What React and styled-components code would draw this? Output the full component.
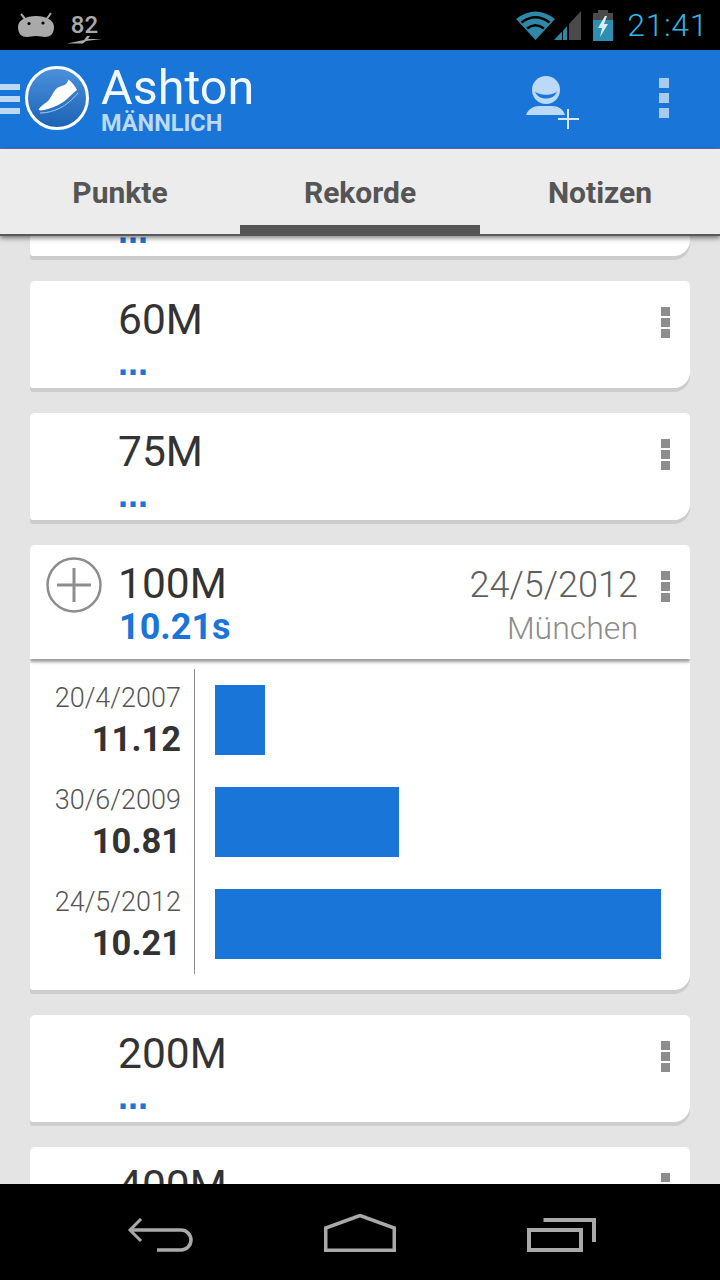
import React from "react";
import styled, { createGlobalStyle } from "styled-components";

const GlobalStyle = createGlobalStyle`
  html, body {
    margin: 0;
    padding: 0;
    background: #000;
    font-family: Roboto, "Liberation Sans", sans-serif;
  }
`;

const Screen = styled.div`
  width: 720px;
  height: 1280px;
  display: flex;
  flex-direction: column;
  overflow: hidden;
  background: #e4e4e4;
`;

const StatusBar = styled.div`
  height: 50px;
  flex: none;
  background: #000;
  display: flex;
  align-items: center;
  padding: 0 12px 0 18px;
`;

const Notifs = styled.div`
  display: flex;
  align-items: center;
  gap: 13px;
  flex: 1;
`;

const SpeedBox = styled.div`
  width: 35px;
  display: flex;
  flex-direction: column;
  align-items: center;
  color: #a9a9a9;
  font-size: 24px;
  font-weight: 500;
  line-height: 24px;
  margin-top: 7px;
  svg { display: block; margin-top: -1px; }
`;

const Clock = styled.div`
  color: #33b5e5;
  font-size: 32px;
  font-weight: 300;
  margin-left: 14px;
  letter-spacing: 0.6px;
`;

const StatusIcons = styled.div`
  display: flex;
  align-items: center;
  gap: 12px;
  svg { display: block; }
`;

const AppBar = styled.div`
  height: 99px;
  flex: none;
  box-sizing: border-box;
  background: #1976d8;
  border-bottom: 1px solid #7263c0;
  display: flex;
  align-items: center;
  position: relative;
  z-index: 2;
`;

const Burger = styled.div`
  width: 20px;
  flex: none;
  display: flex;
  flex-direction: column;
  gap: 6px;
  span {
    display: block;
    height: 6px;
    background: #bcd9f6;
  }
`;

const Logo = styled.div`
  width: 64px;
  height: 64px;
  flex: none;
  margin-left: 5px;
  margin-top: -2px;
  box-sizing: border-box;
  border: 3px solid #fff;
  border-radius: 50%;
  background: linear-gradient(#4a90dc, #1c63b4);
  svg { display: block; }
`;

const TitleBlock = styled.div`
  margin-left: 12px;
  flex: 1;
  display: flex;
  flex-direction: column;
`;

const AppTitle = styled.div`
  color: #f2f8fe;
  font-size: 48.5px;
  font-weight: 400;
  line-height: 46px;
  margin-top: 2px;
`;

const AppSub = styled.div`
  color: #bcd9f6;
  font-size: 23.5px;
  font-weight: 700;
  line-height: 24px;
  margin-top: 0;
`;

const AddUser = styled.div`
  margin-right: 80px;
  margin-top: 8px;
  svg { display: block; }
`;

const BarMenu = styled.div`
  margin-right: 51px;
  margin-top: -2px;
  display: flex;
  flex-direction: column;
  gap: 5px;
  span {
    display: block;
    width: 10px;
    height: 10px;
    background: #a9cbf0;
  }
`;

const Tabs = styled.div`
  height: 87px;
  flex: none;
  display: grid;
  grid-template-columns: repeat(3, 240px);
  background: #ececec;
  border-bottom: 2px solid #5a5a5a;
  box-sizing: border-box;
  position: relative;
  z-index: 2;
  box-shadow: 0 2px 5px rgba(0, 0, 0, 0.5);
`;

const Tab = styled.div`
  display: flex;
  justify-content: center;
  padding-top: 27px;
  color: #555;
  font-size: 30px;
  font-weight: 700;
  line-height: 34px;
  position: relative;
  ${(p) =>
    p.$active &&
    `&::after {
      content: "";
      position: absolute;
      left: 0;
      right: 0;
      bottom: -2px;
      height: 11px;
      background: #555;
    }`}
`;

const Content = styled.div`
  flex: 1;
  min-height: 0;
  overflow: hidden;
`;

const List = styled.div`
  margin-top: -87px;
  padding: 0 30px;
  display: flex;
  flex-direction: column;
  gap: 25px;
`;

const Card = styled.div`
  background: #fff;
  border-radius: 5px 5px 16px 3px;
  box-shadow: 0 4px 0 #cdcdcd;
  overflow: hidden;
`;

const CardHead = styled.div`
  height: ${(p) => (p.$open ? "114px" : "107px")};
  display: flex;
  align-items: flex-start;
  position: relative;
  ${(p) => p.$open && `box-shadow: 0 3px 3px rgba(0, 0, 0, 0.4);`}
`;

const IconSlot = styled.div`
  width: 89px;
  flex: none;
  padding: 12px 0 0 16px;
  box-sizing: border-box;
  svg { display: block; }
`;

const Names = styled.div`
  flex: 1;
  padding-top: 13px;
  margin-left: -1px;
`;

const Dist = styled.div`
  color: #333;
  font-size: 42.5px;
  font-weight: 400;
  line-height: 52px;
`;

const Value = styled.div`
  color: #1976d8;
  font-size: 36px;
  font-weight: 700;
  line-height: 36px;
  margin: -1px 0 0 1px;
  ${(p) => p.$empty && `font-family: "Liberation Sans", sans-serif; margin: -1px 0 0;`}
`;

const Meta = styled.div`
  text-align: right;
  padding-top: 18px;
  margin-right: 3px;
`;

const MetaDate = styled.div`
  color: #5f5f5f;
  font-size: 36px;
  font-weight: 300;
  line-height: 45px;
`;

const MetaPlace = styled.div`
  color: #8c8c8c;
  font-size: 32px;
  font-weight: 300;
  line-height: 40px;
`;

const MoreButton = styled.div`
  width: 49px;
  flex: none;
  display: flex;
  flex-direction: column;
  align-items: center;
  gap: 2px;
  padding-top: 26px;
  box-sizing: border-box;
  span {
    display: block;
    width: 9px;
    height: 9px;
    background: #8d8d8d;
  }
`;

const Chart = styled.div`
  display: flex;
  padding: 10px 29px 16px 0;
`;

const Labels = styled.div`
  width: 165px;
  flex: none;
  box-sizing: border-box;
  border-right: 1px solid #8d8d8d;
  padding: 13px 13px 10px 0;
  display: flex;
  flex-direction: column;
  gap: 24px;
  text-align: right;
`;

const LabelItem = styled.div`
  height: 78px;
`;

const LabelDate = styled.div`
  color: #555;
  font-size: 27px;
  font-weight: 300;
  line-height: 32px;
`;

const LabelValue = styled.div`
  color: #333;
  font-size: 34.5px;
  font-weight: 700;
  line-height: 46px;
  padding-top: 2px;
`;

const Bars = styled.div`
  flex: 1;
  padding: 16px 0 0 20px;
  display: flex;
  flex-direction: column;
  gap: 32px;
`;

const Bar = styled.div`
  height: 70px;
  background: #1976d8;
`;

const NavBar = styled.div`
  height: 96px;
  flex: none;
  box-sizing: border-box;
  background: #000;
  position: relative;
  z-index: 2;
  display: flex;
  justify-content: center;
  align-items: flex-end;
  gap: 131px;
  padding: 0 0 28px 2px;
  svg { display: block; }
`;

const rows = [
  { date: "20/4/2007", value: "11.12", width: 50 },
  { date: "30/6/2009", value: "10.81", width: 184 },
  { date: "24/5/2012", value: "10.21", width: 446 },
];

const More = () => (
  <MoreButton>
    <span />
    <span />
    <span />
  </MoreButton>
);

const EmptyCard = ({ name }) => (
  <Card>
    <CardHead>
      <IconSlot />
      <Names>
        <Dist>{name}</Dist>
        <Value $empty>...</Value>
      </Names>
      <More />
    </CardHead>
  </Card>
);

export default function App() {
  return (
    <Screen>
      <GlobalStyle />
      <StatusBar>
        <Notifs>
          <svg width="36" height="26" viewBox="0 0 36 26">
            <path d="M3 2l5 6M33 1l-5 7" stroke="#a9a9a9" strokeWidth="2" />
            <path
              d="M0 15C0 8 8 4 18 4s18 4 18 11c0 7-4 10-9 10-3 0-5-1-9-1s-6 1-9 1C4 25 0 22 0 15z"
              fill="#a9a9a9"
            />
            <circle cx="11" cy="11.500" r="1.600" fill="#000" />
            <circle cx="25" cy="11" r="1.600" fill="#000" />
          </svg>
          <SpeedBox>
            82
            <svg width="35" height="8" viewBox="0 0 35 8">
              <path d="M0 7.500l17-3.500 3-4h3l-2 3h14l-16 2-3 2.500z" fill="#a9a9a9" />
            </svg>
          </SpeedBox>
        </Notifs>
        <StatusIcons>
          <svg width="65" height="30" viewBox="0 0 65 30">
            <path d="M0 9Q19.500-6 39 9L19.500 30z" fill="#2f87a8" />
            <path
              d="M5.500 12.500Q19.500 2 33.500 12.500M11 18.500Q19.500 12 28 18.500"
              fill="none"
              stroke="#000"
              strokeWidth="2.500"
            />
            <path d="M38 30l8-8.500V30z" fill="#2f87a8" />
            <path d="M47 30V20.500l4-4.300V30z" fill="#2f87a8" />
            <path d="M53 30V14L65 1v29z" fill="#4a4a4a" />
          </svg>
          <svg width="20" height="31" viewBox="0 0 20 31">
            <path d="M5 0h10v3H5z" fill="#4a4a4a" />
            <path d="M0 3h20v7H0z" fill="#4a4a4a" />
            <path d="M0 10h20v21H0z" fill="#2f8fb3" />
            <path d="M12 6l-7 12h4l-2 9 8-13h-4l3-8z" fill="#d8edf6" />
          </svg>
        </StatusIcons>
        <Clock>21:41</Clock>
      </StatusBar>

      <AppBar>
        <Burger>
          <span />
          <span />
          <span />
        </Burger>
        <Logo>
          <svg width="58" height="58" viewBox="0 0 58 58">
            <path
              d="M10.500 41C13 36 17 35 20 32c3-3 5-9 8-12 3-3 7-3 10-5 1-1 2-3 2.500-4.500 3.500 2.500 6.500 6.500 8.500 10.500-4 3-7 6-11 10-5 4-11 7-18 9-4 1-7 2-9.500 1z"
              fill="#fff"
            />
            <path
              d="M12 44c7 0 14-2 20-5s12-8 18-15"
              fill="none"
              stroke="#a9cbf0"
              strokeWidth="1"
            />
          </svg>
        </Logo>
        <TitleBlock>
          <AppTitle>Ashton</AppTitle>
          <AppSub>MÄNNLICH</AppSub>
        </TitleBlock>
        <AddUser>
          <svg width="54" height="56" viewBox="0 0 54 56">
            <circle cx="21" cy="15" r="14" fill="#bcd9f6" />
            <path d="M10 16c3 5 19 5 22 0-2 10-20 10-22 0z" fill="#1976d8" />
            <path d="M1 40c2-6 8-9 13-9h13c6 0 11 3 13 9z" fill="#bcd9f6" />
            <path d="M43 34v20M33 44h21" stroke="#d6e8fa" strokeWidth="2" />
          </svg>
        </AddUser>
        <BarMenu>
          <span />
          <span />
          <span />
        </BarMenu>
      </AppBar>

      <Tabs>
        <Tab>Punkte</Tab>
        <Tab $active>Rekorde</Tab>
        <Tab>Notizen</Tab>
      </Tabs>

      <Content>
        <List>
          <EmptyCard name="50M" />
          <EmptyCard name="60M" />
          <EmptyCard name="75M" />
          <Card>
            <CardHead $open>
              <IconSlot>
                <svg width="56" height="56" viewBox="0 0 56 56">
                  <circle cx="28" cy="28" r="26.500" fill="none" stroke="#8d8d8d" strokeWidth="2.500" />
                  <path d="M11 28h34M28 11v34" stroke="#8d8d8d" strokeWidth="3" />
                </svg>
              </IconSlot>
              <Names>
                <Dist>100M</Dist>
                <Value>10.21s</Value>
              </Names>
              <Meta>
                <MetaDate>24/5/2012</MetaDate>
                <MetaPlace>München</MetaPlace>
              </Meta>
              <More />
            </CardHead>
            <Chart>
              <Labels>
                {rows.map((r) => (
                  <LabelItem key={r.date}>
                    <LabelDate>{r.date}</LabelDate>
                    <LabelValue>{r.value}</LabelValue>
                  </LabelItem>
                ))}
              </Labels>
              <Bars>
                {rows.map((r) => (
                  <Bar key={r.date} style={{ width: r.width }} />
                ))}
              </Bars>
            </Chart>
          </Card>
          <EmptyCard name="200M" />
          <EmptyCard name="400M" />
        </List>
      </Content>

      <NavBar>
        <svg width="66" height="34" viewBox="0 0 66 34">
          <path d="M14 1L3 12l11 11" fill="none" stroke="#a9a9a9" strokeWidth="3" />
          <path d="M3 12h51a10 10 0 0 1 0 20H30" fill="none" stroke="#a9a9a9" strokeWidth="3.500" />
        </svg>
        <svg width="72" height="38" viewBox="0 0 72 38">
          <path d="M1.750 36.250V14L36 1.500 70.250 14v22.250z" fill="none" stroke="#a9a9a9" strokeWidth="3.500" />
        </svg>
        <svg width="69" height="34" viewBox="0 0 69 34">
          <path d="M16.500 2H67v22" fill="none" stroke="#a9a9a9" strokeWidth="4" />
          <path d="M2 12h52v20H2z" fill="none" stroke="#a9a9a9" strokeWidth="4" />
        </svg>
      </NavBar>
    </Screen>
  );
}
